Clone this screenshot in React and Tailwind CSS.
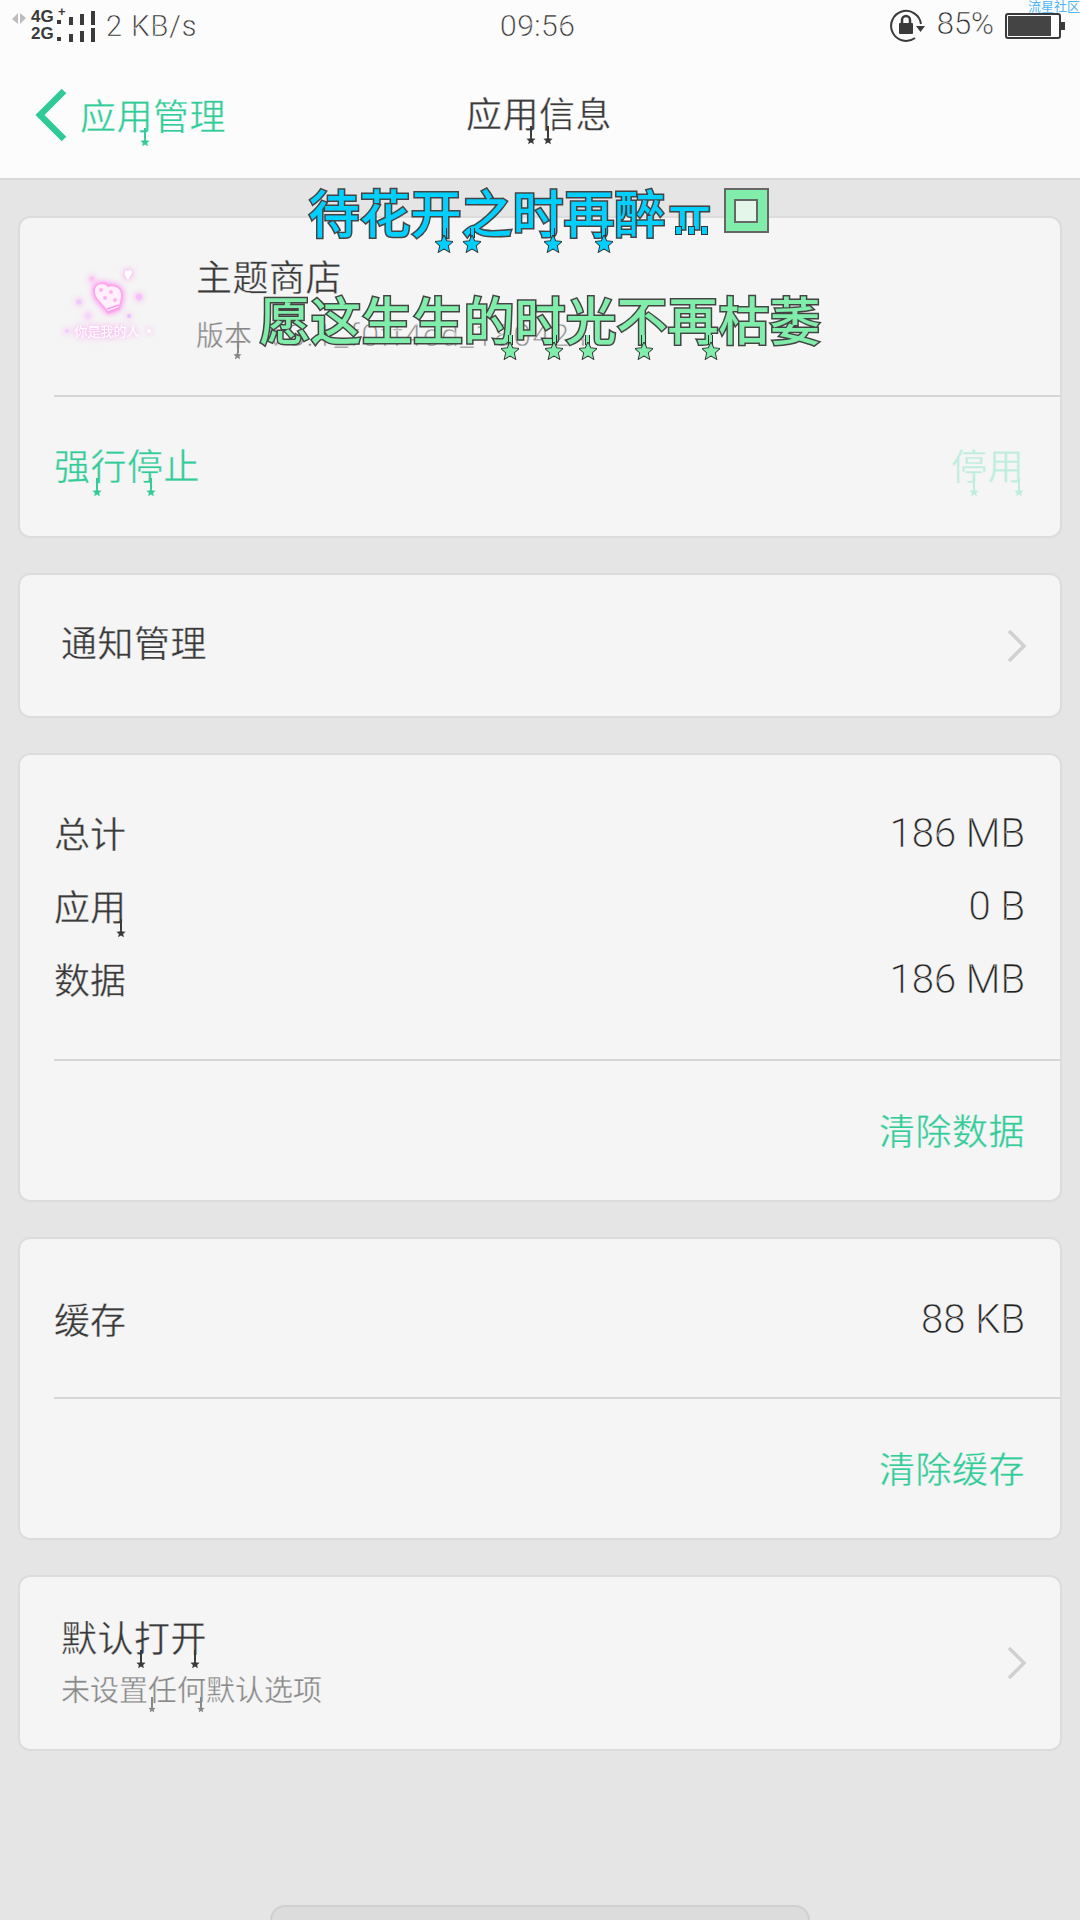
import React from 'react';

const cjk = "font-['Noto_Sans_CJK_SC',sans-serif]";
const latin = "font-['Roboto',sans-serif] font-light";
const starPath = 'M12 1l3.2 7.2 7.8.8-5.900 5.200 1.700 7.800L12 18l-6.800 4 1.700-7.800L1 9l7.800-.8z';

// stem + star that hangs off a glyph of the decorated font
function Tail({ className = '', stem = 'h-[11px]', star = 'w-[10px] h-[10px]' }) {
    return (
        <span className={`absolute top-full -mt-[12px] flex flex-col items-center ${className}`}>
            <span className={`w-[2px] bg-current ${stem}`} />
            <svg viewBox="0 0 24 24" className={`-mt-[2px] ${star}`}>
                <path d={starPath} fill="currentColor" />
            </svg>
        </span>
    );
}

// larger outlined star under the banner text
function Drip({ ch, className = '', color }) {
    return (
        <span className="relative inline-block">
            {ch}
            <span className={`absolute top-[42px] flex flex-col items-center ${className}`}>
                <span className="w-[5px] h-[10px] border-x border-[#333]" style={{ background: color }} />
                <svg viewBox="0 0 24 24" className="-mt-[3px] w-[18px] h-[18px]">
                    <path d={starPath} fill={color} stroke="#333" strokeWidth="2.500" />
                </svg>
            </span>
        </span>
    );
}

function Chevron() {
    return (
        <svg width="20" height="34" viewBox="0 0 20 34" fill="none">
            <path d="M2 2l15 15L2 32" stroke="#d0d0d0" strokeWidth="3.500" />
        </svg>
    );
}

function Signal({ label, plus }) {
    return (
        <div className="flex items-end h-[15px]">
            <span className="w-[34px] font-['Liberation_Sans',sans-serif] font-bold text-[17px] leading-none text-[#3a3a3a] relative">
                {label}
                {plus && <span className="absolute left-[27px] -top-[3px] text-[13px]">+</span>}
                <span className="absolute left-[26px] bottom-[1px] w-[4px] h-[4px] bg-[#3a3a3a]" />
            </span>
            <div className="flex items-end gap-[7px] ml-[4px]">
                <span className="w-[4px] h-[8px] bg-[#3a3a3a]" />
                <span className="w-[4px] h-[11px] bg-[#3a3a3a]" />
                <span className="w-[4px] h-[14px] bg-[#3a3a3a]" />
            </div>
        </div>
    );
}

function StatusBar() {
    const thin = '[-webkit-text-stroke:0.35px_#fcfcfc]';
    return (
        <div className="relative h-[52px] flex items-center justify-between pl-[12px] pr-[15px]">
            <div className="flex items-center">
                <svg width="14" height="11" viewBox="0 0 14 11" className="-mt-[16px]">
                    <path d="M6 0v11L0 6zM8 0l6 5-6 6z" fill="#bdbdbd" />
                </svg>
                <div className="flex flex-col gap-[2px] ml-[5px]">
                    <Signal label="4G" plus />
                    <Signal label="2G" />
                </div>
                <span className={`${latin} ${thin} ml-[11px] text-[29px] leading-none text-[#222] tracking-[1px]`}>2 KB/s</span>
            </div>
            <span className={`${latin} ${thin} absolute left-[500px] top-[8px] text-[30px] leading-[36px] text-[#222] tracking-[0.5px]`}>09:56</span>
            <div className="flex items-center">
                <svg width="38" height="34" viewBox="0 0 38 34" fill="none" className="mr-[1px]">
                    <path d="M32 15A15 15 0 1 0 26 29" stroke="#3a3a3a" strokeWidth="2" />
                    <path d="M27 17h9l-4.500 6z" fill="#3a3a3a" />
                    <rect x="10" y="14" width="14" height="11" rx="1" fill="#3a3a3a" />
                    <path d="M13 14V11a4 4 0 0 1 8 0v3" stroke="#3a3a3a" strokeWidth="2.500" />
                </svg>
                <span className={`${latin} ${thin} ml-[9px] text-[31px] leading-none text-[#222] -mt-[6px]`}>85%</span>
                <div className="ml-[11px] w-[56px] h-[26px] border-2 border-[#3a3a3a] rounded-[3px] p-[1px] flex">
                    <div className="w-[43px] bg-[#444]" />
                </div>
                <div className="w-[4px] h-[8px] bg-[#3a3a3a]" />
            </div>
            <span className={`${cjk} absolute right-0 -top-[1px] text-[13px] leading-[14px] text-[#4db5f5]`}>流星社区</span>
        </div>
    );
}

function Header() {
    return (
        <div className={`${cjk} relative h-[128px] flex items-center border-b-2 border-[#d8d8d8] [-webkit-text-stroke:0.35px_#fcfcfc]`}>
            <svg width="32" height="54" viewBox="0 0 32 54" fill="none" className="ml-[35px] -mt-[1px]">
                <path d="M29 3L5 27l24 24" stroke="#2ecb98" strokeWidth="6.500" />
            </svg>
            <span className="ml-[13px] -mt-[3px] text-[36px] tracking-[0.5px] leading-none text-[#33cc99]">
                应<span className="relative">用<Tail className="right-[3px]" /></span>管理
            </span>
            <span className="absolute left-[466px] top-[42px] text-[36px] tracking-[0.5px] leading-none text-[#3a3a3a]">
                应<span className="relative">用<Tail className="right-[3px]" /></span><span className="relative">信<Tail className="left-[4px]" /></span>息
            </span>
        </div>
    );
}

function Card({ className = '', children }) {
    return <div className={`bg-[#f5f5f5] border-2 border-[#dcdcdc] rounded-[12px] [-webkit-text-stroke:0.35px_#f5f5f5] ${className}`}>{children}</div>;
}

function Divider() {
    return <div className="ml-[34px] h-[2px] bg-[#d6d6d6]" />;
}

function AppLogo() {
    return (
        <svg width="96" height="84" viewBox="0 0 96 84" className="drop-shadow-[0_0_3px_#ff7cf0]">
            <path d="M38 24C40 17 50 17 52 21C56 19 66 21 66 30C66 36 64 40 63 44L52 48C48 40 36 34 38 24z" fill="#fff0fb" stroke="#ffa8ee" strokeWidth="2" />
            <path d="M51 44l12-4M52 47l11-4" stroke="#ff9cec" strokeWidth="1.500" />
            <circle cx="45" cy="25" r="2" fill="#ffb4f2" />
            <circle cx="55" cy="27" r="2" fill="#ffb4f2" />
            <circle cx="49" cy="33" r="2" fill="#ffb4f2" />
            <circle cx="59" cy="35" r="2" fill="#ffb4f2" />
            <path d="M72 6c1-2 4-1 4 1 0 3-3 5-4 8-2-3-4-5-3-8 0-2 2-2 3-1z" fill="#fff" />
            <circle cx="36" cy="14" r="2.500" fill="#ffc4f4" />
            <circle cx="23" cy="37" r="2.500" fill="#eecbff" />
            <circle cx="83" cy="32" r="3" fill="#f5c0ff" />
            <circle cx="32" cy="51" r="2.500" fill="#f1d6ff" />
            <circle cx="73" cy="51" r="2" fill="#e2c4ff" />
            <text x="51" y="71" textAnchor="middle" fontSize="13" fill="#fff" fontFamily="Noto Sans CJK SC">你是我的人</text>
            <circle cx="11" cy="66" r="2" fill="#f1d0ff" />
            <circle cx="93" cy="66" r="2" fill="#ffffff" />
        </svg>
    );
}

function Overlay() {
    const base = `${cjk} font-medium leading-none text-[51px] [-webkit-text-stroke:3px_#444] [paint-order:stroke_fill]`;
    return (
        <div className="absolute left-0 right-0 top-[186px] flex flex-col items-center gap-[56px] pointer-events-none">
            <div className={`${base} h-[51px] text-[#00cfff] flex items-start -ml-[3px]`}>
                <span>待</span>
                <span>花</span>
                <Drip ch="开" className="left-[25px]" color="#00cfff" />
                <Drip ch="之" className="left-[2px]" color="#00cfff" />
                <Drip ch="时" className="left-[31px]" color="#00cfff" />
                <Drip ch="再" className="left-[31px]" color="#00cfff" />
                <span>醉</span>
                <span className="relative w-[50px] ml-[3px] text-[46px] mt-[2px]">
                    ㅠ
                    <span className="absolute left-[6px] top-[38px] flex gap-[6px]">
                        <span className="w-[7px] h-[9px] bg-[#00cfff] border border-[#333]" />
                        <span className="w-[7px] h-[9px] bg-[#00cfff] border border-[#333]" />
                        <span className="w-[7px] h-[9px] bg-[#00cfff] border border-[#333]" />
                    </span>
                </span>
                <span className="ml-[5px] mt-[2px] w-[45px] h-[45px] bg-[#80eeaa] border-2 border-[#666] flex items-center justify-center">
                    <span className="w-[24px] h-[24px] border-2 border-[#666] bg-[#e4f6ea]" />
                </span>
            </div>
            <div className={`${base} h-[51px] text-[#80eeaa] flex items-start`}>
                <span>愿</span>
                <span>这</span>
                <span>生</span>
                <span>生</span>
                <Drip ch="的" className="left-[38px]" color="#80eeaa" />
                <Drip ch="时" className="left-[31px]" color="#80eeaa" />
                <Drip ch="光" className="left-[13px]" color="#80eeaa" />
                <Drip ch="不" className="left-[18px]" color="#80eeaa" />
                <Drip ch="再" className="left-[34px]" color="#80eeaa" />
                <span>枯</span>
                <span>萎</span>
            </div>
        </div>
    );
}

export default function App() {
    return (
        <div className={`${cjk} relative w-[1080px] h-[1920px] overflow-hidden bg-[#e5e5e5] text-[#3a3a3a]`}>
            <div className="bg-[#fcfcfc]">
                <StatusBar />
                <Header />
            </div>

            <div className="flex flex-col gap-[35px] px-[18px] pt-[36px]">
                {/* App info */}
                <Card className="h-[322px] flex flex-col">
                    <div className="h-[177px] flex items-center">
                        <div className="ml-[36px]">
                            <AppLogo />
                        </div>
                        <div className="ml-[44px] -mt-[5px]">
                            <div className="text-[36px] tracking-[0.5px] leading-none">主题商店</div>
                            <div className="mt-[26px] text-[28px] leading-none text-[#888] whitespace-nowrap">
                                版<span className="relative">本<Tail className="left-[9px]" star="w-[9px] h-[9px]" /></span>
                                <span className={`${latin} ml-[14px] text-[32px] tracking-[1.3px]`}>V8.1_f0ff4cd_180424</span>
                            </div>
                        </div>
                    </div>
                    <Divider />
                    <div className="flex-1 flex items-center justify-between pl-[34px] pr-[36px] pb-[6px] text-[36px] tracking-[0.5px] leading-none">
                        <span className="text-[#33cc99]">
                            强<span className="relative">行<Tail className="left-[1px]" /></span><span className="relative">停<Tail className="left-[19px]" /></span>止
                        </span>
                        <span className="text-[#bdeedd]">
                            <span className="relative">停<Tail className="left-[18px]" /></span><span className="relative">用<Tail className="right-0" /></span>
                        </span>
                    </div>
                </Card>

                {/* Notifications */}
                <Card className="h-[145px] flex items-center justify-between pl-[41px] pr-[33px]">
                    <span className="text-[36px] tracking-[0.5px] leading-none -mt-[10px]">通知管理</span>
                    <Chevron />
                </Card>

                {/* Storage */}
                <Card className="h-[449px] flex flex-col">
                    <div className="h-[304px] pt-[40px] px-[34px]">
                        {[['总计', '186 MB'], ['应用', '0 B'], ['数据', '186 MB']].map(([label, value]) => (
                            <div key={label} className="h-[73px] flex items-center justify-between">
                                <span className="text-[36px] leading-none">
                                    {label === '应用' ? (
                                        <>应<span className="relative">用<Tail className="right-0" /></span></>
                                    ) : label}
                                </span>
                                <span className={`${latin} text-[40px] leading-none mt-[5px] mr-[1px] text-[#222]`}>{value}</span>
                            </div>
                        ))}
                    </div>
                    <Divider />
                    <div className="flex-1 flex items-center justify-end pr-[35px] pb-[4px] text-[36px] tracking-[0.5px] leading-none text-[#33cc99]">清除数据</div>
                </Card>

                {/* Cache */}
                <Card className="h-[303px] flex flex-col">
                    <div className="h-[158px] flex items-center justify-between px-[34px]">
                        <span className="text-[36px] leading-none">缓存</span>
                        <span className={`${latin} text-[40px] leading-none mt-[3px] mr-[1px] text-[#222]`}>88 KB</span>
                    </div>
                    <Divider />
                    <div className="flex-1 flex items-center justify-end pr-[35px] pb-[4px] text-[36px] tracking-[0.5px] leading-none text-[#33cc99]">清除缓存</div>
                </Card>

                {/* Default open */}
                <Card className="h-[176px] flex items-center justify-between pl-[41px] pr-[33px]">
                    <div className="-mt-[6px]">
                        <div className="text-[36px] tracking-[0.5px] leading-none">
                            默认<span className="relative">打<Tail className="left-[2px]" /></span><span className="relative">开<Tail className="left-[19px]" /></span>
                        </div>
                        <div className="mt-[20px] text-[29px] leading-none text-[#888]">
                            未设置<span className="relative">任<Tail className="left-[0px]" stem="h-[10px]" star="w-[8px] h-[8px]" /></span><span className="relative">何<Tail className="left-[20px]" stem="h-[10px]" star="w-[8px] h-[8px]" /></span>默认选项
                        </div>
                    </div>
                    <Chevron />
                </Card>
            </div>

            <div className="absolute left-[270px] bottom-0 w-[540px] h-[15px] bg-[#dcdcdc] border-t-2 border-x-2 border-[#d0d0d0] rounded-t-[16px]" />

            <Overlay />
        </div>
    );
}
